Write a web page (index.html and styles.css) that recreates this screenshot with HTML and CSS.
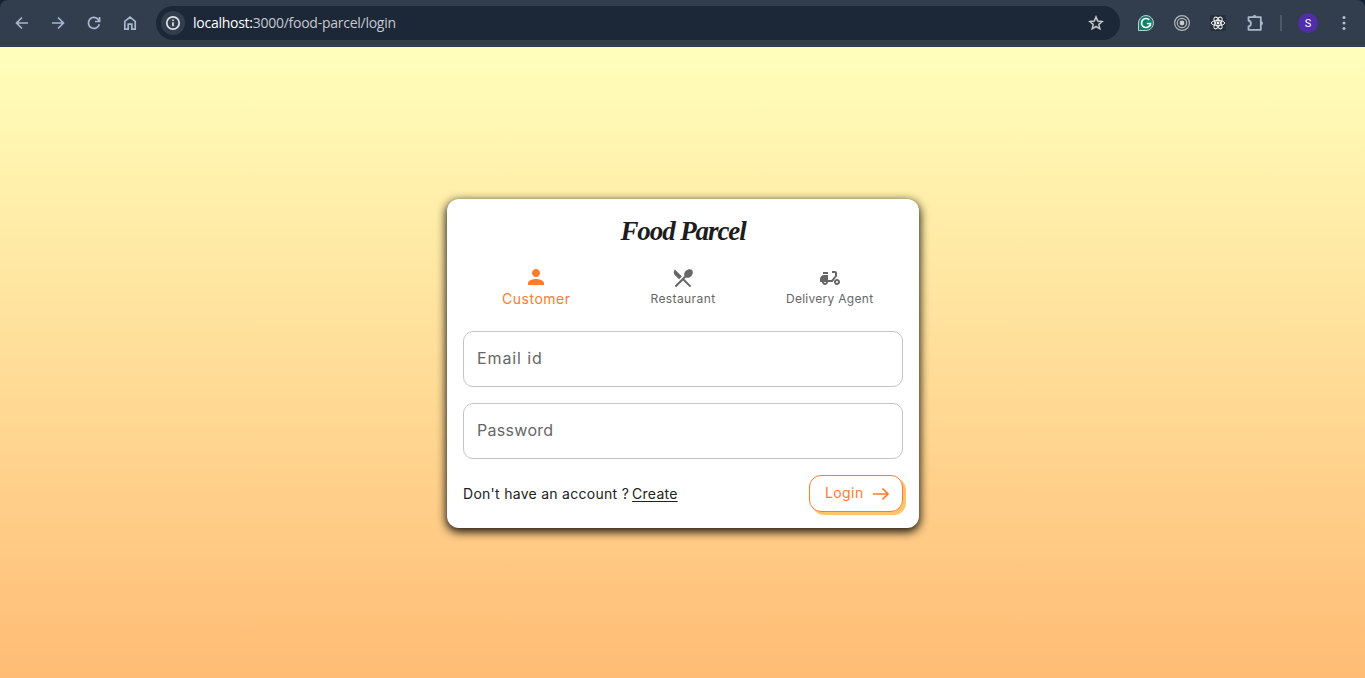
FILE: index.html
```html
<!DOCTYPE html>
<html lang="en">
<head>
<meta charset="utf-8">
<title>Food Parcel</title>
<link rel="stylesheet" href="styles.css">
</head>
<body>
<header class="toolbar-wrap">
  <div class="toolbar">
    <nav class="nav">
      <svg class="ico" viewBox="0 0 16 16"><path d="M14 8H2.5M8 2.5 2.5 8 8 13.5"/></svg>
      <svg class="ico" viewBox="0 0 16 16"><path d="M2 8h11.500M8 2.500 13.500 8 8 13.500"/></svg>
      <svg class="ico" viewBox="0 0 16 16"><path d="M13.300 9.200A5.500 5.500 0 1 1 12.600 5L13.500 6.500M13.600 2v4.500H9"/></svg>
      <svg class="ico" viewBox="0 0 16 16"><path d="M2.800 6.300 8 2.200l5.200 4.100v7.900H9.800V9.200H6.200v5H2.800z"/></svg>
    </nav>
    <div class="address">
      <span class="info"><svg class="ico light" viewBox="0 0 16 16"><circle cx="8" cy="8" r="6.200"/><path d="M8 7.200v4M8 4.500v1.600"/></svg></span>
      <span class="url"><span class="host">localhost:</span>3000/food-parcel/login</span>
      <svg class="ico star" viewBox="0 0 16 16"><path d="m8 1.900 1.700 4.200 4.500.4-3.400 2.900 1 4.400L8 11.500l-3.800 2.300 1-4.400-3.400-2.900 4.500-.4z"/></svg>
    </div>
    <div class="extensions">
      <svg class="ext" viewBox="0 0 16 16"><path d="M8 .5a7.500 7.500 0 1 1 0 15H.5V8A7.500 7.500 0 0 1 8 .5z" fill="#11806a" stroke="#b9cfd0"/><path d="M11.300 4.900A4.500 4.500 0 1 0 12.500 8.500H8.800M12.300 8.300v3" fill="none" stroke="#fff" stroke-width="1.700"/></svg>
      <svg class="ext" viewBox="0 0 16 16"><g fill="none" stroke="#b2b5ba" stroke-width="1.200"><circle cx="8" cy="8" r="7.400"/><circle cx="8" cy="8" r="4.700"/></g><circle cx="8" cy="8" r="2.400" fill="#c8cacd"/></svg>
      <svg class="ext react" viewBox="0 0 16 16"><g fill="none" stroke="#f0f0f0" stroke-width="1"><ellipse cx="8" cy="8" rx="6.700" ry="2.600"/><ellipse cx="8" cy="8" rx="6.500" ry="2.600" transform="rotate(60 8 8)"/><ellipse cx="8" cy="8" rx="6.500" ry="2.600" transform="rotate(120 8 8)"/></g><circle cx="8" cy="8" r="1.400" fill="#fff"/></svg>
      <svg class="ext puzzle" viewBox="0 0 18 18"><path d="M2.500 3.200h12.300v12.600H2.500v-3.300c3.200-.7 3.200-5.300 0-6z" fill="none" stroke="#a9b8cf" stroke-width="1.800" stroke-linejoin="round"/><path d="M6.600 3a2 2 0 0 1 4 0zM15 7.300a2 2 0 0 1 0 4z" fill="#a9b8cf"/></svg>
    </div>
    <span class="divider"></span>
    <span class="avatar">S</span>
    <svg class="more" viewBox="0 0 4 16"><circle cx="2" cy="2.500" r="1.500"/><circle cx="2" cy="8" r="1.500"/><circle cx="2" cy="13.500" r="1.500"/></svg>
  </div>
</header>
<main class="page">
  <form class="card">
    <h1 class="brand">Food Parcel</h1>
    <div class="tabs">
      <div class="tab active">
        <svg viewBox="0 0 24 24"><path d="M12 12c2.210 0 4-1.790 4-4s-1.790-4-4-4-4 1.790-4 4 1.790 4 4 4zm0 2c-2.670 0-8 1.340-8 4v2h16v-2c0-2.660-5.330-4-8-4z"/></svg>
        <span class="label customer">Customer</span>
      </div>
      <div class="tab">
        <svg viewBox="0 0 24 24"><path d="m8.100 13.340 2.830-2.830L3.910 3.500c-1.560 1.560-1.560 4.090 0 5.660l4.190 4.180zm6.780-1.810c1.530.710 3.680.210 5.270-1.380 1.910-1.910 2.280-4.650.810-6.120-1.460-1.460-4.200-1.100-6.120.810-1.590 1.590-2.090 3.740-1.380 5.270L3.700 19.870l1.410 1.410L12 14.410l6.880 6.880 1.410-1.410L13.410 13l1.470-1.470z"/></svg>
        <span class="label">Restaurant</span>
      </div>
      <div class="tab">
        <svg viewBox="0 0 24 24"><path d="M19 7c0-1.100-.9-2-2-2h-3v2h3v2.650L13.520 14H10V9H6c-2.210 0-4 1.790-4 4v3h2c0 1.660 1.340 3 3 3s3-1.340 3-3h4.480L19 10.350V7zM7 17c-.550 0-1-.450-1-1h2c0 .550-.450 1-1 1zM5 6h5v2H5zM19 13c-1.660 0-3 1.340-3 3s1.340 3 3 3 3-1.340 3-3-1.340-3-3-3zm0 4c-.550 0-1-.450-1-1s.450-1 1-1 1 .450 1 1-.450 1-1 1z"/></svg>
        <span class="label delivery">Delivery Agent</span>
      </div>
    </div>
    <div class="field"><span class="email">Email id</span></div>
    <div class="field"><span class="password">Password</span></div>
    <div class="actions">
      <p class="signup"><span class="question">Don't have an account ?</span><a class="create">Create</a></p>
      <div class="login"><span class="login-text">Login</span><svg viewBox="0 0 18 14"><path d="M1 7h15M10.500 1.500 16 7l-5.500 5.500"/></svg></div>
    </div>
  </form>
</main>
</body>
</html>
```
FILE: styles.css
```css
* { box-sizing: border-box; }
body {
  margin: 0;
  height: 678px;
  display: flex;
  flex-direction: column;
  overflow: hidden;
  font-family: Inter, "Open Sans", sans-serif;
}
svg { display: block; flex: none; }
.toolbar-wrap { background: #152233; height: 47px; flex: none; }
.toolbar {
  height: 47px;
  display: flex;
  align-items: center;
  padding: 0 19px 1px 14px;
  background: #323d4d;
  border-radius: 8px 8px 0 0;
}
.nav { display: flex; gap: 20px; }
.ico { width: 16px; height: 16px; fill: none; stroke: #a9b8cf; stroke-width: 1.700; }
.light { stroke: #dfe3e9; }
.address {
  width: 964px;
  height: 34px;
  margin-left: 18px;
  display: flex;
  align-items: center;
  padding: 0 16px 0 5px;
  border-radius: 17px;
  background: #1c2737;
}
.info {
  width: 24px;
  height: 24px;
  display: flex;
  align-items: center;
  justify-content: center;
  border-radius: 50%;
  background: #323d4d;
}
.url {
  margin-left: 8px;
  font: 14px/20px "Open Sans", sans-serif;
  letter-spacing: -0.260px;
  color: #c5c9cf;
}
.host { color: #fff; }
.star { margin-left: auto; stroke: #c3c7cd; stroke-width: 1.500; }
.extensions { display: flex; align-items: center; gap: 20px; margin-left: 18px; }
.ext { width: 16px; height: 16px; }
.react { background: #27303d; }
.puzzle { width: 18px; height: 18px; }
.divider { width: 2px; height: 16px; margin-left: 16px; background: #4e5a6c; }
.avatar {
  width: 20px;
  height: 20px;
  margin-left: 16px;
  border-radius: 50%;
  background: #512da8;
  color: #fff;
  font: 11px/21px Roboto, sans-serif;
  text-align: center;
}
.more { width: 4px; height: 16px; margin-left: auto; fill: #b4c0d2; }
.page {
  flex: 1;
  display: flex;
  align-items: center;
  justify-content: center;
  padding: 1px 0 0 1px;
  background: linear-gradient(#ffffbb, #ffbc75);
}
.card {
  width: 472px;
  height: 329px;
  padding: 16px;
  border-radius: 12px;
  background: #fff;
  box-shadow: 0 3px 10px 1px rgba(0, 0, 0, .9);
}
.brand {
  margin: 0;
  height: 32px;
  color: #1d1d1d;
  font: italic bold 27px/32px "Liberation Serif", serif;
  letter-spacing: -1.100px;
  text-align: center;
  white-space: nowrap;
}
.tabs { display: grid; grid-template-columns: repeat(3, 1fr); height: 68px; margin-bottom: 16px; }
.tab { display: flex; flex-direction: column; align-items: center; padding-top: 19px; color: #666; }
.tab svg { width: 24px; height: 24px; fill: currentColor; }
.label { font-size: 12px; line-height: 18px; letter-spacing: .400px; white-space: nowrap; }
.active { padding-top: 18px; color: #ff7b29; }
.customer { font-size: 14px; line-height: 19px; letter-spacing: .500px; }
.delivery { letter-spacing: .280px; }
.field {
  display: flex;
  align-items: center;
  height: 56px;
  margin-bottom: 16px;
  padding: 0 13px 2px;
  border: 1px solid #c4c4c4;
  border-radius: 10px;
  color: #666;
  font-size: 16px;
}
.email { letter-spacing: .900px; }
.password { letter-spacing: .300px; }
.actions { display: flex; justify-content: space-between; align-items: center; height: 37px; }
.signup { display: flex; gap: 3px; margin: 0; padding-top: 2px; color: #212121; font-size: 14px; line-height: 20px; white-space: nowrap; }
.question { letter-spacing: .280px; }
.create { letter-spacing: .250px; text-decoration: underline; text-underline-offset: 2px; }
.login {
  display: flex;
  align-items: center;
  justify-content: space-between;
  width: 94px;
  height: 37px;
  padding: 0 12px 0 15px;
  border: 1px solid #ff7b29;
  border-radius: 12px;
  background: #fff;
  box-shadow: 3px 3px 0 #ffc56b;
  color: #ff7b29;
  font-size: 14px;
}
.login-text { padding-bottom: 1px; letter-spacing: .400px; }
.login svg { width: 18px; height: 14px; margin-top: 1px; fill: none; stroke: currentColor; stroke-width: 1.700; }
```
